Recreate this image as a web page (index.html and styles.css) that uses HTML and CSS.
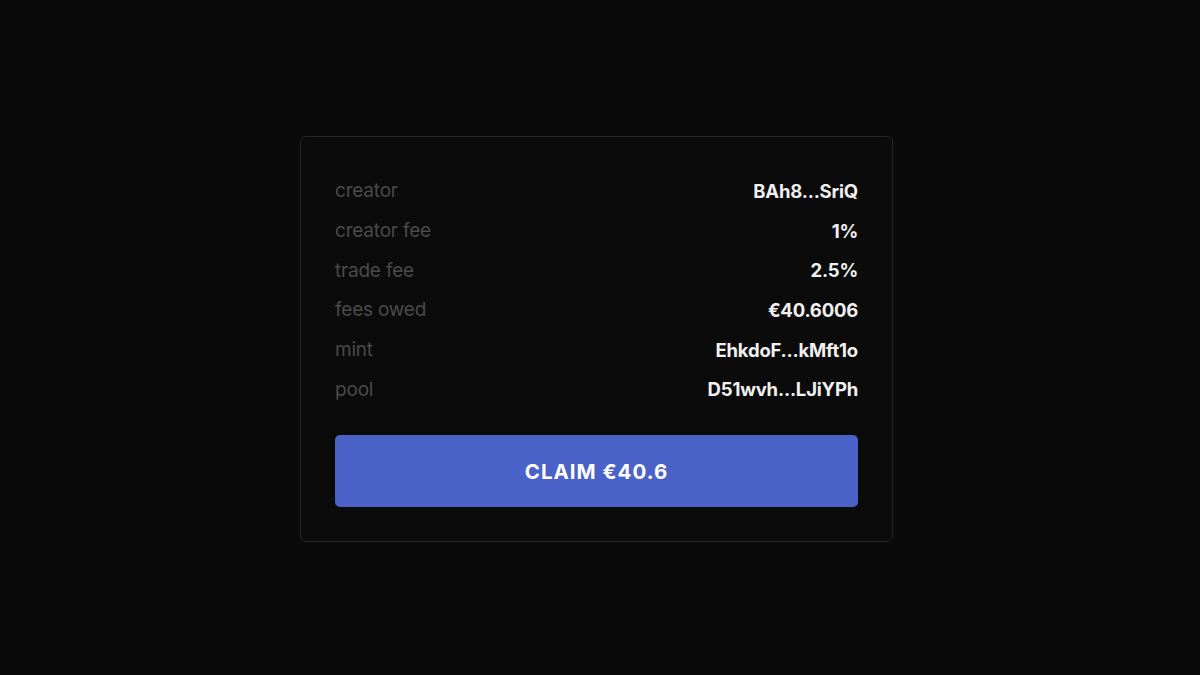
FILE: index.html
```html
<!DOCTYPE html>
<html>
<head>
<meta charset="utf-8">
<link rel="stylesheet" href="styles.css">
</head>
<body>
<div class="page">
  <div class="card">
    <div class="rows">
      <div class="row"><span class="label">creator</span><span class="value">BAh8...SriQ</span></div>
      <div class="row"><span class="label">creator fee</span><span class="value">1%</span></div>
      <div class="row"><span class="label">trade fee</span><span class="value">2.5%</span></div>
      <div class="row"><span class="label">fees owed</span><span class="value">€40.6006</span></div>
      <div class="row"><span class="label">mint</span><span class="value">EhkdoF...kMft1o</span></div>
      <div class="row"><span class="label">pool</span><span class="value">D51wvh...LJiYPh</span></div>
    </div>
    <button class="claim">CLAIM €40.6</button>
  </div>
</div>
</body>
</html>
```
FILE: styles.css
```css
html, body {
  margin: 0;
  padding: 0;
  background: #0a0a0a;
  height: 100%;
}
.page {
  height: 675px;
  display: flex;
  justify-content: center;
  padding-top: 136px;
  box-sizing: border-box;
  align-items: flex-start;
  font-family: Inter, "Noto Sans", sans-serif;
}
.card {
  width: 593px;
  margin-right: 7px;
  box-sizing: border-box;
  background: #0b0b0b;
  border: 1px solid #262626;
  border-radius: 6px;
  padding: 34px 34px 34px 34px;
  display: flex;
  flex-direction: column;
  gap: 26px;
}
.rows {
  display: flex;
  flex-direction: column;
}
.row {
  height: 39.7px;
  display: flex;
  justify-content: space-between;
  align-items: center;
}
.label {
  color: #4a4a4a;
  font-size: 19px;
  font-weight: 400;
  letter-spacing: -0.2px;
}
.value {
  color: #f0f0f0;
  font-size: 18.5px;
  font-weight: 700;
  letter-spacing: -0.2px;
}
.claim {
  height: 72px;
  border: none;
  border-radius: 5px;
  background: #4a62c8;
  color: #ffffff;
  font-family: Inter, "Noto Sans", sans-serif;
  font-size: 20.5px;
  font-weight: 700;
  letter-spacing: 1px;
  cursor: pointer;
}
```
